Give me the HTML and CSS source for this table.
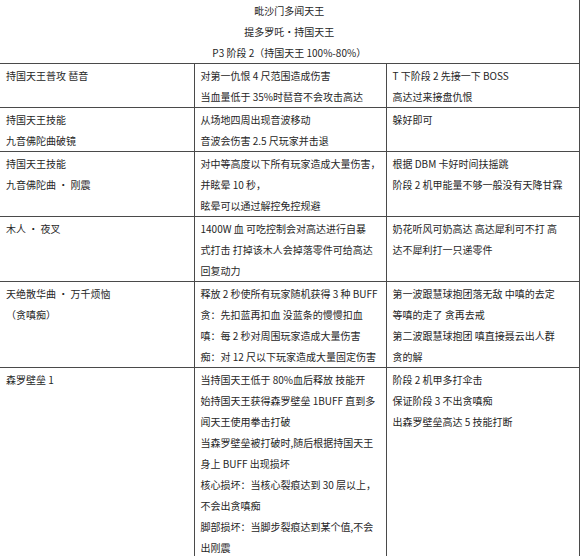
FILE: index.html
```html
<!DOCTYPE html>
<html lang="zh">
<head>
<meta charset="utf-8">
<link rel="stylesheet" href="styles.css">
</head>
<body>
<table class="guide">
  <colgroup><col class="c1"><col class="c2"><col class="c3"></colgroup>
  <tr class="r0">
    <td colspan="3" class="head">
      <p>毗沙门多闻天王</p>
      <p>提多罗吒·持国天王</p>
      <p>P3 阶段 2（持国天王 100%-80%）</p>
    </td>
  </tr>
  <tr class="r1">
    <td><p>持国天王普攻 琶音</p></td>
    <td><p>对第一仇恨 4 尺范围造成伤害</p><p>当血量低于 35%时琶音不会攻击高达</p></td>
    <td><p>T 下阶段 2 先接一下 BOSS</p><p>高达过来接盘仇恨</p></td>
  </tr>
  <tr class="r2">
    <td><p>持国天王技能</p><p>九音佛陀曲破镜</p></td>
    <td><p>从场地四周出现音波移动</p><p>音波会伤害 2.5 尺玩家并击退</p></td>
    <td><p>躲好即可</p></td>
  </tr>
  <tr class="r3">
    <td><p>持国天王技能</p><p>九音佛陀曲 · 刚震</p></td>
    <td><p>对中等高度以下所有玩家造成大量伤害，</p><p>并眩晕 10 秒，</p><p>眩晕可以通过解控免控规避</p></td>
    <td><p>根据 DBM 卡好时间扶摇跳</p><p>阶段 2 机甲能量不够一般没有天降甘霖</p></td>
  </tr>
  <tr class="r4">
    <td><p>木人 · 夜叉</p></td>
    <td><p>1400W 血 可吃控制会对高达进行自暴</p><p>式打击 打掉该木人会掉落零件可给高达</p><p>回复动力</p></td>
    <td><p>奶花听风可奶高达 高达犀利可不打 高</p><p>达不犀利打一只递零件</p></td>
  </tr>
  <tr class="r5">
    <td><p>天绝散华曲 · 万千烦恼</p><p>（贪嗔痴）</p></td>
    <td><p>释放 2 秒使所有玩家随机获得 3 种 BUFF</p><p>贪：先扣蓝再扣血 没蓝条的慢慢扣血</p><p>嗔：每 2 秒对周围玩家造成大量伤害</p><p>痴：对 12 尺以下玩家造成大量固定伤害</p></td>
    <td><p>第一波跟慧球抱团落无敌 中嗔的去定</p><p>等嗔的走了 贪再去戒</p><p>第二波跟慧球抱团 嗔直接聂云出人群</p><p>贪的解</p></td>
  </tr>
  <tr class="r6">
    <td><p>森罗壁垒 1</p></td>
    <td><p>当持国天王低于 80%血后释放 技能开</p><p>始持国天王获得森罗壁垒 1BUFF 直到多</p><p>闻天王使用拳击打破</p><p>当森罗壁垒被打破时,随后根据持国天王</p><p>身上 BUFF 出现损坏</p><p>核心损坏：当核心裂痕达到 30 层以上，</p><p>不会出贪嗔痴</p><p>脚部损坏：当脚步裂痕达到某个值,不会</p><p>出刚震</p></td>
    <td><p>阶段 2 机甲多打伞击</p><p>保证阶段 3 不出贪嗔痴</p><p>出森罗壁垒高达 5 技能打断</p></td>
  </tr>
</table>
</body>
</html>
```
FILE: styles.css
```css
html, body {
  margin: 0;
  padding: 0;
  background: #ffffff;
}
body {
  font-family: "Noto Sans CJK SC", "Noto Sans", sans-serif;
  font-size: 10px;
  color: #262626;
}
.guide {
  border-collapse: collapse;
  table-layout: fixed;
  width: 579px;
}
.c1 { width: 194px; }
.c2 { width: 192px; }
.c3 { width: 193px; }
.guide td {
  border: 1px solid #4a4a4a;
  vertical-align: top;
  padding: 1px 4px 0 6px;
  white-space: nowrap;
  overflow: hidden;
}
.guide td:first-child { border-left: none; }
.guide .r0 td { border-top: none; }
.guide td.head {
  text-align: center;
  padding: 0;
}
.guide p {
  margin: 0;
  line-height: 21px;
  height: 21px;
}
.r1 td { height: 42px; }
.r2 td { height: 40px; }
.r6 td { height: 184px; }
```
